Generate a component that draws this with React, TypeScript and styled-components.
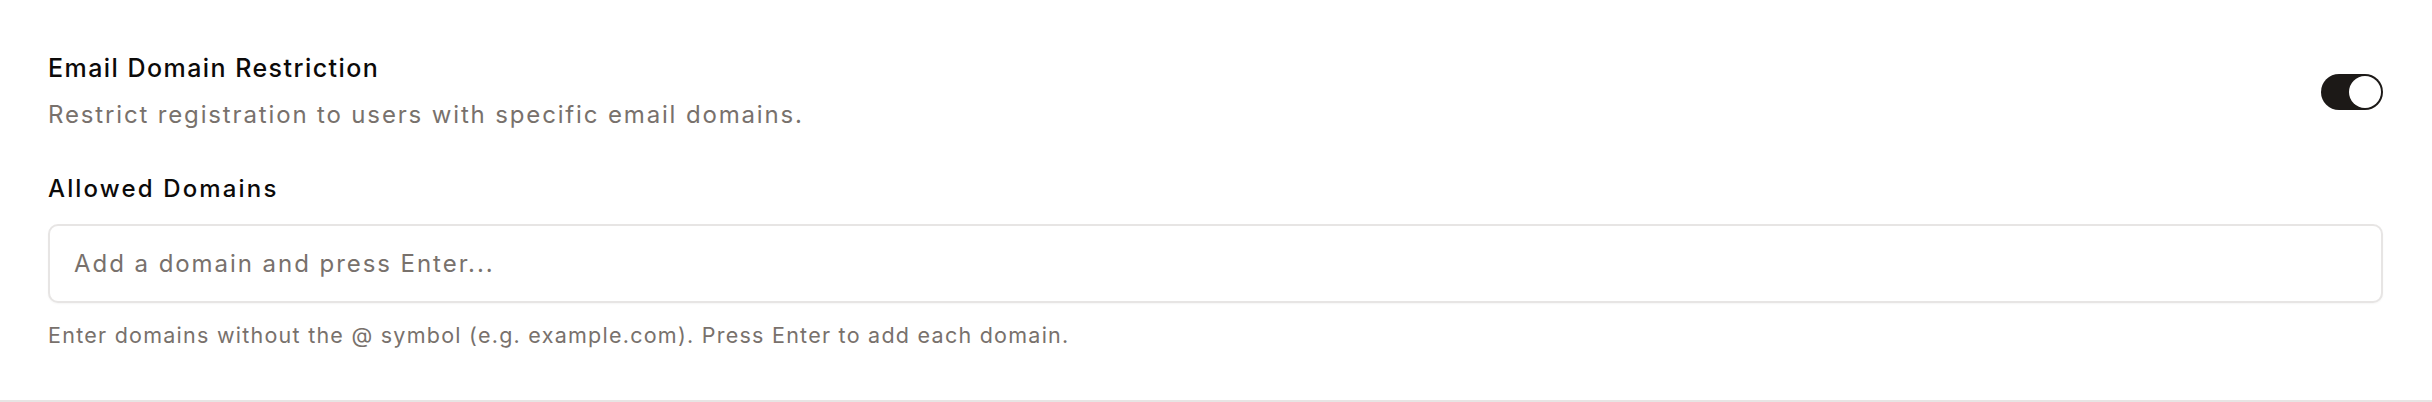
import React, { useState } from "react";
import styled, { createGlobalStyle } from "styled-components";

const GlobalStyle = createGlobalStyle`
  html, body {
    margin: 0;
    padding: 0;
    background: #ffffff;
    font-family: Inter, "Noto Sans", sans-serif;
    -webkit-font-smoothing: antialiased;
  }
  * {
    box-sizing: border-box;
  }
`;

const Section = styled.section`
  padding: 50px 49px 49px 48px;
  border-bottom: 2px solid #e7e5e4;
`;

const SettingRow = styled.div`
  display: flex;
  align-items: center;
  justify-content: space-between;
  gap: 24px;
`;

const SettingText = styled.div`
  display: flex;
  flex-direction: column;
  gap: 11px;
`;

const Title = styled.h3`
  margin: 0;
  font-size: 25px;
  line-height: 36px;
  font-weight: 500;
  letter-spacing: 1.45px;
  color: #0c0a09;
`;

const Description = styled.p`
  margin: 0;
  font-size: 24px;
  line-height: 36px;
  letter-spacing: 1.85px;
  color: #78716c;
`;

const Track = styled.button<{ $on: boolean }>`
  position: relative;
  width: 62px;
  height: 36px;
  padding: 0;
  border: none;
  border-radius: 18px;
  background: ${(p) => (p.$on ? "#1c1917" : "#e7e5e4")};
  cursor: pointer;
  flex-shrink: 0;
`;

const Thumb = styled.span<{ $on: boolean }>`
  position: absolute;
  top: 2px;
  left: ${(p) => (p.$on ? "28px" : "2px")};
  width: 32px;
  height: 32px;
  border-radius: 50%;
  background: #ffffff;
  transition: left 0.15s ease;
`;

const Field = styled.div`
  display: flex;
  flex-direction: column;
  margin-top: 38px;
`;

const Label = styled.label`
  font-size: 24px;
  line-height: 36px;
  font-weight: 500;
  letter-spacing: 2.15px;
  color: #0c0a09;
`;

const Input = styled.input`
  margin-top: 17px;
  height: 79px;
  width: 100%;
  padding: 0 24px;
  border: 2px solid #e7e5e4;
  border-radius: 10px;
  box-shadow: 0 1px 2px rgba(0, 0, 0, 0.04);
  font-family: inherit;
  font-size: 24px;
  letter-spacing: 1.95px;
  color: #0c0a09;
  outline: none;
  &::placeholder {
    color: #78716c;
  }
`;

const Hint = styled.p`
  margin: 16px 0 0;
  font-size: 21.5px;
  line-height: 32px;
  letter-spacing: 1.25px;
  color: #78716c;
`;

export default function App() {
  const [on, setOn] = useState(true);
  const [value, setValue] = useState("");

  return (
    <>
      <GlobalStyle />
      <Section>
        <SettingRow>
          <SettingText>
            <Title>Email Domain Restriction</Title>
            <Description>
              Restrict registration to users with specific email domains.
            </Description>
          </SettingText>
          <Track $on={on} onClick={() => setOn(!on)} aria-pressed={on}>
            <Thumb $on={on} />
          </Track>
        </SettingRow>
        <Field>
          <Label htmlFor="domains">Allowed Domains</Label>
          <Input
            id="domains"
            value={value}
            onChange={(e) => setValue(e.target.value)}
            placeholder="Add a domain and press Enter..."
          />
          <Hint>
            Enter domains without the @ symbol (e.g. example.com). Press Enter
            to add each domain.
          </Hint>
        </Field>
      </Section>
    </>
  );
}
